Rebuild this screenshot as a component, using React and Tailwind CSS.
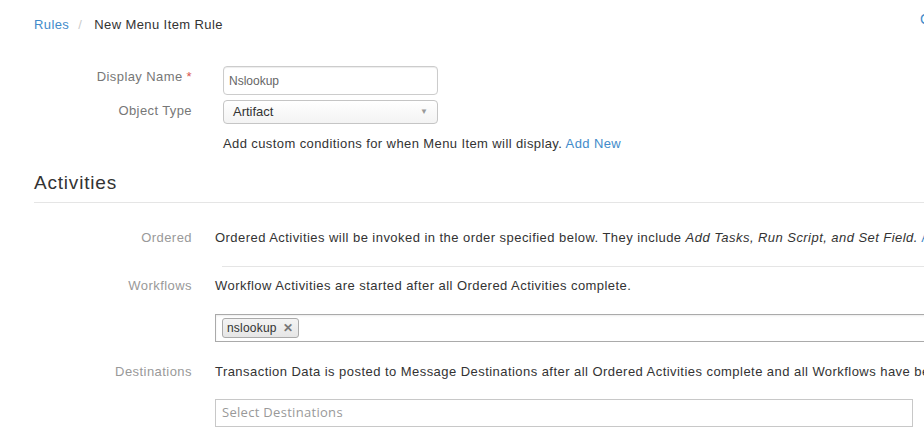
export default function App() {
  const sans = { fontFamily: '"Liberation Sans", Arial, Helvetica, sans-serif' };
  return (
    <div className="w-[924px] h-[437px] overflow-hidden bg-white text-[#333]" style={sans}>
      <div className="w-[1300px] pl-[34px] pt-[16px]">
        {/* breadcrumb */}
        <div className="flex items-start">
          <div className="w-[886px] flex text-[13px] leading-[17px] tracking-[0.4px] whitespace-nowrap">
            <a className="text-[#428bca]">Rules</a>
            <span className="text-[#ccc] pl-[9px] pr-[12px]">/</span>
            <span className="text-[#333]">New Menu Item Rule</span>
          </div>
          <a className="text-[14px] leading-[17px] -mt-[5px] text-[#428bca] whitespace-nowrap">Cancel</a>
        </div>

        {/* form */}
        <div className="mt-[33px] flex items-start">
          <div className="w-[158px] pt-[2px] text-right text-[13px] leading-[17px] tracking-[0.4px] text-[#777] whitespace-nowrap">
            Display Name <span className="text-[#d9534f]">*</span>
          </div>
          <div className="ml-[31px] w-[215px] h-[29px] border border-[#ccc] rounded-[4px] shadow-[inset_0_1px_1px_rgba(0,0,0,0.075)] flex items-center pl-[5px] text-[12px] text-[#666]">
            Nslookup
          </div>
        </div>
        <div className="mt-[5px] flex items-start">
          <div className="w-[158px] pt-[2px] text-right text-[13px] leading-[17px] tracking-[0.4px] text-[#777] whitespace-nowrap">
            Object Type
          </div>
          <div className="ml-[31px] w-[215px] h-[24px] border border-[#c5c5c5] rounded-[4px] bg-gradient-to-b from-white to-[#f3f3f3] flex items-center justify-between pl-[9px] pr-[9px] text-[13px] text-[#333]">
            <span>Artifact</span>
            <span className="text-[8px] text-[#999]">▼</span>
          </div>
        </div>
        <div className="mt-[11px] ml-[189px] text-[13px] leading-[17px] tracking-[0.4px] whitespace-nowrap">
          Add custom conditions for when Menu Item will display. <a className="text-[#428bca]">Add New</a>
        </div>

        {/* Activities */}
        <div className="mt-[21px] pb-[9px] border-b border-[#e5e5e5] text-[19px] leading-[20px] tracking-[0.8px] text-[#333]">
          Activities
        </div>

        <div className="mt-[26px] flex items-start">
          <div className="w-[158px] text-right text-[13px] leading-[17px] tracking-[0.45px] text-[#999] whitespace-nowrap">Ordered</div>
          <div className="ml-[23px] text-[13px] leading-[17px] tracking-[0.45px] whitespace-nowrap">
            Ordered Activities will be invoked in the order specified below. They include{' '}
            <i>Add Tasks, Run Script, and Set Field.</i> <a className="text-[#428bca]">Add Ordered Activity</a>
          </div>
        </div>
        <div className="mt-[20px] ml-[188px] h-px bg-[#e5e5e5]"></div>

        <div className="mt-[10px] flex items-start">
          <div className="w-[158px] text-right text-[13px] leading-[17px] tracking-[0.45px] text-[#999] whitespace-nowrap">Workflows</div>
          <div className="ml-[23px] text-[13px] leading-[17px] tracking-[0.45px] whitespace-nowrap">
            Workflow Activities are started after all Ordered Activities complete.
          </div>
        </div>
        <div className="mt-[20px] ml-[181px] w-[800px] h-[28px] border border-[#aaa] shadow-[inset_0_1px_2px_rgba(0,0,0,0.08)] flex items-center pl-[6px]">
          <div className="h-[20px] w-[77px] border border-[#aaa] rounded-[3px] bg-gradient-to-b from-[#f4f4f4] to-[#e6e6e6] flex items-center pl-[4px] text-[12px] tracking-[0.2px] text-[#333] whitespace-nowrap">
            nslookup<span className="ml-[6px] text-[#777] text-[12px] font-bold">✕</span>
          </div>
        </div>

        <div className="mt-[21px] flex items-start">
          <div className="w-[158px] text-right text-[13px] leading-[17px] tracking-[0.45px] text-[#999] whitespace-nowrap">Destinations</div>
          <div className="ml-[23px] text-[13px] leading-[17px] tracking-[0.45px] whitespace-nowrap">
            Transaction Data is posted to Message Destinations after all Ordered Activities complete and all Workflows have been completed.
          </div>
        </div>
        <div className="mt-[19px] ml-[181px] w-[698px] h-[28px] border border-[#c8c8c8] flex items-center pl-[6px] text-[13px] tracking-[0.3px] text-[#999]" style={{ fontFamily: '"Open Sans", sans-serif' }}>
          Select Destinations
        </div>
      </div>
    </div>
  );
}
